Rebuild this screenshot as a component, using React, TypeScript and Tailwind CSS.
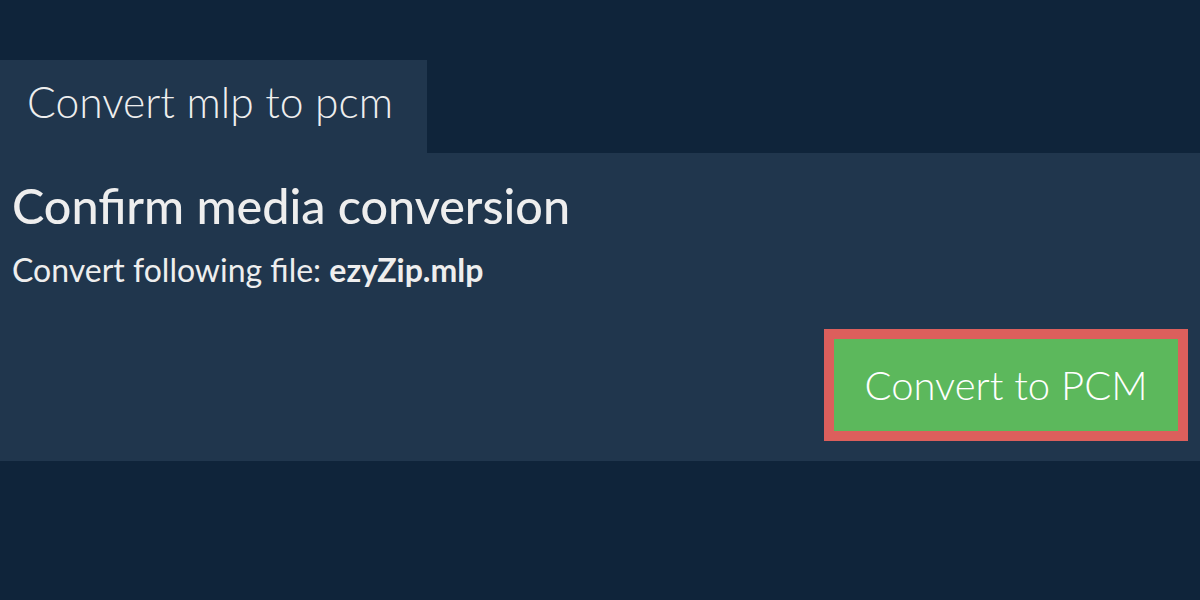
export default function App() {
  return (
    <div className="h-[600px] w-[1200px] bg-[#0f243a] pt-[60px] font-['Lato',sans-serif] text-[#eeeeee]">
      {/* Tab */}
      <div className="flex h-[93px] w-[427px] items-start bg-[#20364d] pl-[27px] pt-[16px]">
        <span className="text-[42.6px] font-light leading-[52px]">Convert mlp to pcm</span>
      </div>

      {/* Panel */}
      <div className="flex h-[308px] flex-col bg-[#20364d] px-[12px] pt-[24px]">
        <h1 className="text-[48.5px] font-medium leading-[56px]">Confirm media conversion</h1>
        <p className="mt-[19px] text-[32px] leading-[36px]">
          Convert following file: <b className="font-bold">ezyZip.mlp</b>
        </p>
        <div className="mt-[41px] flex justify-end">
          <button className="flex h-[112px] w-[364px] items-center justify-center border-[10px] border-[#dc5f5c] bg-[#5cb85c] text-[40px] font-light text-white">
            Convert to PCM
          </button>
        </div>
      </div>
    </div>
  );
}
